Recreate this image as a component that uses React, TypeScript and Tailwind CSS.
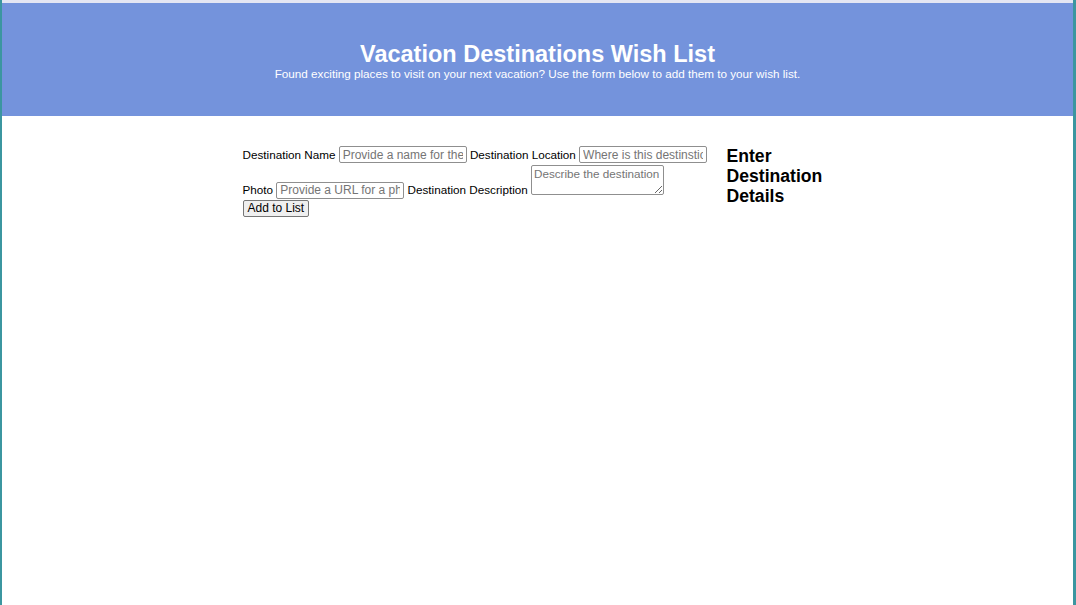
import React, { useState } from 'react'

interface Destination {
    name: string
    location: string
    photo: string
    description: string
}

const fieldClass =
    'inline-block align-baseline h-[17px] w-[128px] px-[3px] border border-[#8f8f8f] rounded-[2px] bg-white text-[12px] leading-[13px] placeholder:text-[#757575]'

const App: React.FC = () => {
    const [name, setName] = useState<string>('')
    const [location, setLocation] = useState<string>('')
    const [photo, setPhoto] = useState<string>('')
    const [description, setDescription] = useState<string>('')
    const [list, setList] = useState<Destination[]>([])

    const handleSubmit = (e: React.FormEvent) => {
        e.preventDefault()
        if (!name) return
        setList([...list, { name, location, photo, description }])
        setName('')
        setLocation('')
        setPhoto('')
        setDescription('')
    }

    return (
        <div
            className="min-h-[605px] bg-white border-l-2 border-r-[3px] border-[#3b96a0] text-black"
            style={{ fontFamily: '"Liberation Sans", Arial, sans-serif' }}
        >
            <div className="h-[3px] bg-[#e4e6f3]" />
            <header className="h-[113px] bg-[#7493dc] text-white text-center pt-[38px]">
                <h1 className="m-0 text-[23.5px] leading-[27px] font-bold">Vacation Destinations Wish List</h1>
                <p className="m-0 text-[11.7px] leading-[12px]">
                    Found exciting places to visit on your next vacation? Use the form below to add them to your wish list.
                </p>
            </header>

            <main className="flex justify-center gap-[12px] pt-[30px]">
                <form onSubmit={handleSubmit} className="w-[472px] text-[11.7px] leading-[14px]">
                    <label htmlFor="name">Destination Name</label>{' '}
                    <input
                        id="name"
                        type="text"
                        value={name}
                        onChange={(e) => setName(e.target.value)}
                        placeholder="Provide a name for the destination"
                        className={fieldClass}
                    />{' '}
                    <label htmlFor="location">Destination Location</label>{' '}
                    <input
                        id="location"
                        type="text"
                        value={location}
                        onChange={(e) => setLocation(e.target.value)}
                        placeholder="Where is this destinstion?"
                        className={fieldClass}
                    />{' '}
                    <label htmlFor="photo">Photo</label>{' '}
                    <input
                        id="photo"
                        type="text"
                        value={photo}
                        onChange={(e) => setPhoto(e.target.value)}
                        placeholder="Provide a URL for a photo"
                        className={fieldClass}
                    />{' '}
                    <label htmlFor="description">Destination Description</label>{' '}
                    <textarea
                        id="description"
                        value={description}
                        onChange={(e) => setDescription(e.target.value)}
                        placeholder="Describe the destination"
                        className="inline-block align-[-1px] mt-[2px] h-[30px] w-[133px] px-[2px] py-[1px] border border-[#8f8f8f] rounded-[2px] bg-white text-[11.7px] leading-[13px] placeholder:text-[#757575]"
                    />{' '}
                    <button
                        type="submit"
                        className="inline-block align-baseline mt-[1px] h-[17px] px-[4px] border border-[#767676] rounded-[2px] bg-[#efefef] text-[12px] leading-[13px]"
                    >
                        Add to List
                    </button>
                </form>

                <h2 className="m-0 w-[106px] text-[17.6px] leading-[20px] font-bold">Enter Destination Details</h2>
            </main>
        </div>
    )
}

export default App
